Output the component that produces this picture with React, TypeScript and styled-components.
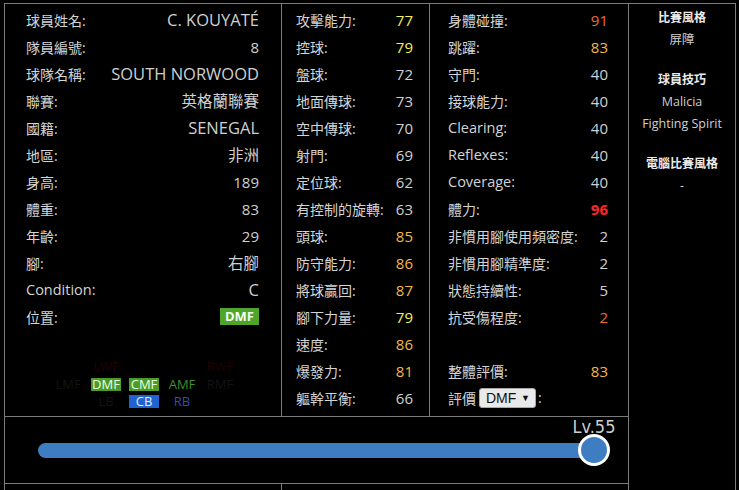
import React from "react";
import styled, { createGlobalStyle, css } from "styled-components";

const Global = createGlobalStyle`
  html, body { margin: 0; padding: 0; background: #000; overflow: hidden; }
  body { font-family: "Open Sans", "Noto Sans CJK TC", sans-serif; color: #d0d0d0; }
`;

type Tone = "plain" | "yellow" | "orange" | "hot" | "red";
type Script = "cjk" | "word" | "num";

const toneColor: Record<Tone, string> = {
  plain: "#d0d0d0",
  yellow: "#f2f256",
  orange: "#f4b748",
  hot: "#ec6a3a",
  red: "#ff2626",
};

const scriptOf = (s: string): Script =>
  /[\u3400-\u9fff]/.test(s) ? "cjk" : /^[0-9\s]+$/.test(s) ? "num" : "word";

const valueSize: Record<Script, string> = { cjk: "15.5px", word: "16.5px", num: "15px" };

const Page = styled.div`
  padding: 3px 0 0 4px;
`;

const Board = styled.div`
  display: grid;
  box-sizing: border-box;
  width: 732px;
  grid-template-columns: 276px 147px 198px 106px;
  grid-template-rows: 412px 66px 40px;
  gap: 1px;
  padding: 1px;
  background: #7c7c7c;
`;

const Cell = styled.div`
  background: #000;
  min-width: 0;
`;

const InfoCell = styled(Cell)<{ $pl: number; $pr: number }>`
  display: flex;
  flex-direction: column;
  padding: 2px ${(p) => p.$pr}px 0 ${(p) => p.$pl}px;
`;

const Row = styled.div<{ $start?: boolean }>`
  display: flex;
  align-items: center;
  justify-content: ${(p) => (p.$start ? "flex-start" : "space-between")};
  height: 27px;
  white-space: nowrap;
`;

const Label = styled.span<{ $cjk: boolean }>`
  font-size: ${(p) => (p.$cjk ? "14px" : "14.5px")};
  color: #d4d4d4;
`;

const Value = styled.span<{ $script: Script; $tone: Tone }>`
  font-size: ${(p) => valueSize[p.$script]};
  color: ${(p) => toneColor[p.$tone]};
  font-weight: ${(p) => (p.$tone === "red" ? 700 : 400)};
`;

const PosBadge = styled.span`
  display: inline-block;
  width: 39px;
  height: 17px;
  line-height: 17px;
  text-align: center;
  background: #4fa42c;
  color: #f4fff0;
  font-size: 13px;
  font-weight: 700;
`;

const Chart = styled.div`
  display: grid;
  grid-template-columns: repeat(5, 38px);
  grid-auto-rows: 17.5px;
  margin: 28px 0 0 23px;
`;

type PosKind = "boxGreen" | "textGreen" | "boxBlue" | "textBlue" | "dim" | "dimRed" | "none";

const Pos = styled.span<{ $kind: PosKind }>`
  justify-self: center;
  align-self: center;
  min-width: 30px;
  height: 13px;
  line-height: 13px;
  text-align: center;
  font-size: 13px;
  white-space: nowrap;
  ${(p) =>
    p.$kind === "boxGreen"
      ? css`background: #4a9b2a; color: #e8ffe0;`
      : p.$kind === "boxBlue"
      ? css`background: #2062cf; color: #e4ecff;`
      : p.$kind === "textGreen"
      ? css`color: #3f8f2c;`
      : p.$kind === "textBlue"
      ? css`color: #2f4fb0;`
      : p.$kind === "dimRed"
      ? css`color: #1e0303;`
      : p.$kind === "dim"
      ? css`color: #131313;`
      : css`color: transparent;`}
`;

const Picker = styled.span`
  display: inline-flex;
  align-items: center;
  justify-content: space-between;
  box-sizing: border-box;
  width: 57px;
  height: 20px;
  margin: 0 2px 0 3px;
  padding: 0 5px 0 6px;
  background: #e9e9e9;
  border: 1px solid #a8a8a8;
  border-radius: 3px;
  color: #111;
  font-family: "Liberation Sans", Arial, sans-serif;
  font-size: 14px;
`;

const Caret = styled.span`
  font-size: 9px;
  color: #111;
`;

const Side = styled(Cell)`
  grid-column: 4;
  grid-row: 1 / 4;
  display: flex;
  flex-direction: column;
  gap: 18px;
  padding-top: 3px;
  text-align: center;
`;

const Group = styled.div`
  display: flex;
  flex-direction: column;
  line-height: 22px;
`;

const GroupTitle = styled.span`
  font-size: 12px;
  font-weight: 700;
  color: #ececec;
`;

const GroupItem = styled.span`
  font-size: 12.5px;
  color: #cfcfcf;
`;

const SliderCell = styled(Cell)`
  grid-column: 1 / 4;
  display: flex;
  align-items: center;
  padding: 0 18px 0 33px;
`;

const Rail = styled.div`
  position: relative;
  flex: 1;
  height: 32px;
  display: flex;
  align-items: center;
`;

const Fill = styled.div`
  height: 15px;
  border-radius: 8px;
  background: #3f7dc2;
`;

const Thumb = styled.div`
  position: absolute;
  top: 50%;
  box-sizing: border-box;
  width: 32px;
  height: 32px;
  margin-top: -16px;
  border: 3px solid #fff;
  border-radius: 50%;
  background: #3f7dc2;
`;

const LevelTag = styled.span`
  position: absolute;
  bottom: 100%;
  left: 50%;
  transform: translateX(-50%);
  margin-bottom: 1px;
  font-family: "Liberation Sans Narrow", "DejaVu Sans Condensed", sans-serif;
  font-size: 18px;
  line-height: 18px;
  color: #cfcfcf;
  white-space: nowrap;
`;

const BottomLeft = styled(Cell)`
  grid-column: 1;
`;
const BottomMid = styled(Cell)`
  grid-column: 2 / 4;
`;

type Item = [string, string, Tone?];

const info: Item[] = [
  ["球員姓名:", "C. KOUYATÉ"],
  ["隊員編號:", "8"],
  ["球隊名稱:", "SOUTH NORWOOD"],
  ["聯賽:", "英格蘭聯賽"],
  ["國籍:", "SENEGAL"],
  ["地區:", "非洲"],
  ["身高:", "189"],
  ["體重:", "83"],
  ["年齡:", "29"],
  ["腳:", "右腳"],
  ["Condition:", "C"],
];

const attack: Item[] = [
  ["攻擊能力:", "77", "yellow"],
  ["控球:", "79", "yellow"],
  ["盤球:", "72"],
  ["地面傳球:", "73"],
  ["空中傳球:", "70"],
  ["射門:", "69"],
  ["定位球:", "62"],
  ["有控制的旋轉:", "63"],
  ["頭球:", "85", "orange"],
  ["防守能力:", "86", "orange"],
  ["將球贏回:", "87", "orange"],
  ["腳下力量:", "79", "yellow"],
  ["速度:", "86", "orange"],
  ["爆發力:", "81", "orange"],
  ["軀幹平衡:", "66"],
];

const physical: Item[] = [
  ["身體碰撞:", "91", "hot"],
  ["跳躍:", "83", "orange"],
  ["守門:", "40"],
  ["接球能力:", "40"],
  ["Clearing:", "40"],
  ["Reflexes:", "40"],
  ["Coverage:", "40"],
  ["體力:", "96", "red"],
  ["非慣用腳使用頻密度:", "2"],
  ["非慣用腳精準度:", "2"],
  ["狀態持續性:", "5"],
  ["抗受傷程度:", "2", "hot"],
];

const chart: [string, PosKind][] = [
  ["", "none"], ["LWF", "dimRed"], ["", "none"], ["", "none"], ["RWF", "dimRed"],
  ["LMF", "dim"], ["DMF", "boxGreen"], ["CMF", "boxGreen"], ["AMF", "textGreen"], ["RMF", "dim"],
  ["", "none"], ["LB", "dim"], ["CB", "boxBlue"], ["RB", "textBlue"], ["", "none"],
];

const StatRow = ({ item }: { item: Item }) => (
  <Row>
    <Label $cjk={scriptOf(item[0]) === "cjk"}>{item[0]}</Label>
    <Value $script={scriptOf(item[1])} $tone={item[2] ?? "plain"}>
      {item[1]}
    </Value>
  </Row>
);

export default function App() {
  return (
    <Page>
      <Global />
      <Board>
        <InfoCell $pl={21} $pr={22}>
          {info.map((it) => (
            <StatRow key={it[0]} item={it} />
          ))}
          <Row>
            <Label $cjk>位置:</Label>
            <PosBadge>DMF</PosBadge>
          </Row>
          <Chart>
            {chart.map(([t, k], i) => (
              <Pos key={i} $kind={k}>
                {t}
              </Pos>
            ))}
          </Chart>
        </InfoCell>
        <InfoCell $pl={14} $pr={16}>
          {attack.map((it) => (
            <StatRow key={it[0]} item={it} />
          ))}
        </InfoCell>
        <InfoCell $pl={18} $pr={20}>
          {physical.map((it) => (
            <StatRow key={it[0]} item={it} />
          ))}
          <Row />
          <StatRow item={["整體評價:", "83", "orange"]} />
          <Row $start>
            <Label $cjk>評價</Label>
            <Picker>
              DMF<Caret>▼</Caret>
            </Picker>
            <Label $cjk>:</Label>
          </Row>
        </InfoCell>
        <Side>
          <Group>
            <GroupTitle>比賽風格</GroupTitle>
            <GroupItem>屏障</GroupItem>
          </Group>
          <Group>
            <GroupTitle>球員技巧</GroupTitle>
            <GroupItem>Malicia</GroupItem>
            <GroupItem>Fighting Spirit</GroupItem>
          </Group>
          <Group>
            <GroupTitle>電腦比賽風格</GroupTitle>
            <GroupItem>-</GroupItem>
          </Group>
        </Side>
        <SliderCell>
          <Rail>
            <Fill style={{ width: "calc(100% - 16px)" }} />
            <Thumb style={{ left: "calc(100% - 32px)" }}>
              <LevelTag>Lv.55</LevelTag>
            </Thumb>
          </Rail>
        </SliderCell>
        <BottomLeft />
        <BottomMid />
      </Board>
    </Page>
  );
}
